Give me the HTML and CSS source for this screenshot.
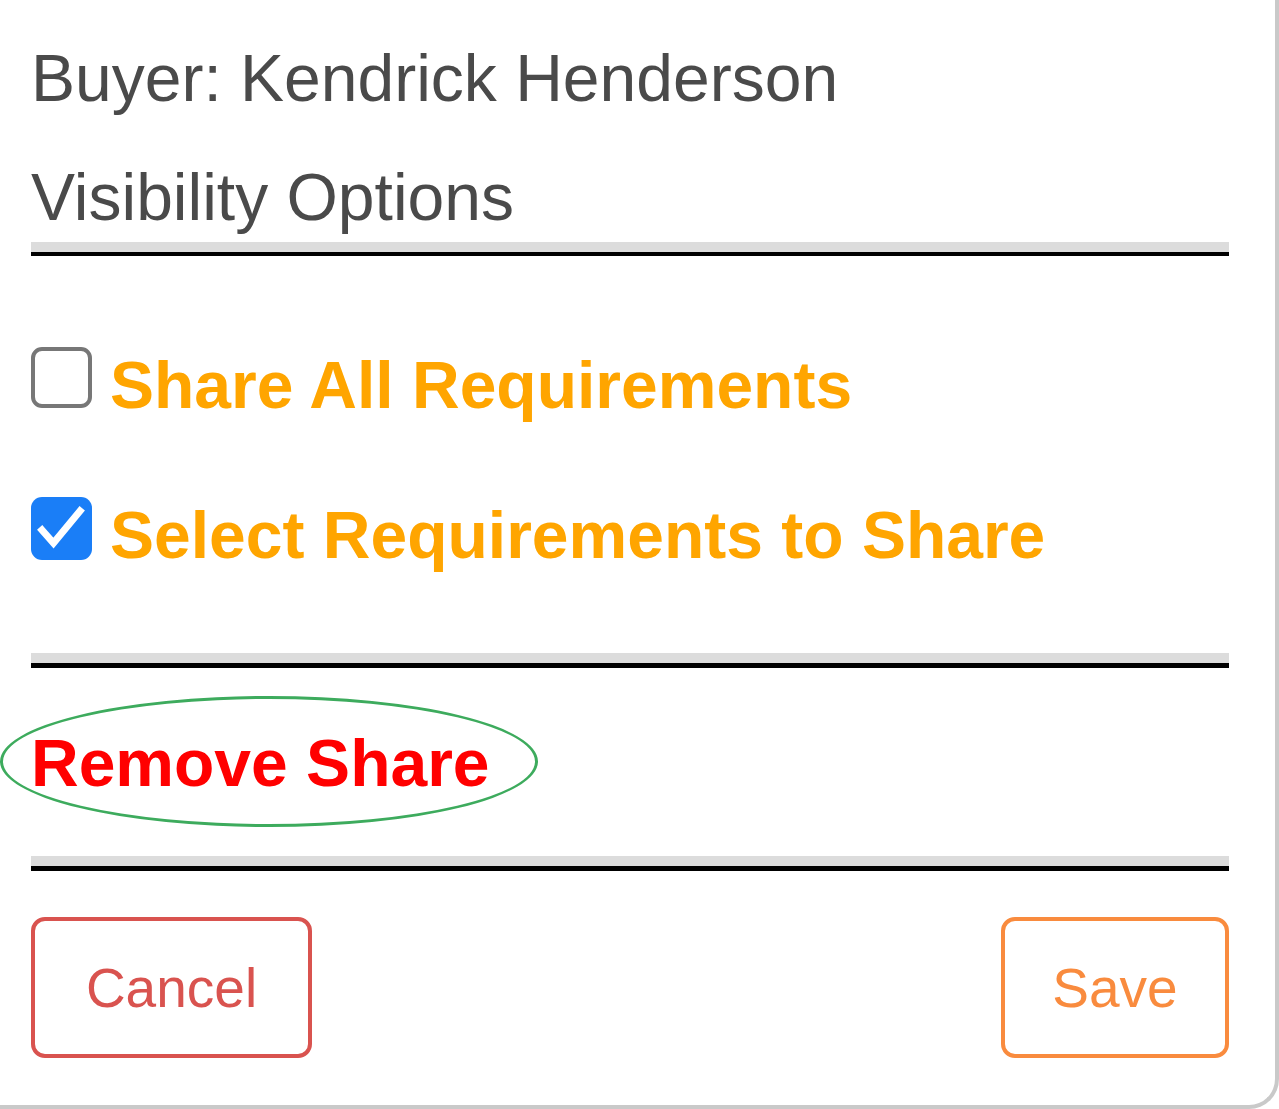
FILE: index.html
```html
<!DOCTYPE html>
<html lang="en">
<head>
<meta charset="utf-8">
<title>Share Visibility</title>
<link rel="stylesheet" href="styles.css">
</head>
<body>
<div class="panel">
  <div class="buyer">Buyer: Kendrick Henderson</div>
  <div class="section-title">Visibility Options</div>
  <div class="divider divider-top"></div>

  <label class="option option-first">
    <span class="box"></span>
    <span class="option-text">Share All Requirements</span>
  </label>
  <label class="option option-second">
    <span class="box box-checked">
      <svg viewBox="0 0 61 63" width="61" height="63" aria-hidden="true">
        <path d="M11 33 L22.5 46 L49 14" fill="none" stroke="#fff" stroke-width="7" stroke-linecap="square" stroke-linejoin="miter"/>
      </svg>
    </span>
    <span class="option-text">Select Requirements to Share</span>
  </label>

  <div class="divider divider-mid"></div>

  <div class="remove-row">
    <span class="remove">Remove Share</span>
    <span class="highlight"></span>
  </div>

  <div class="divider divider-bottom"></div>

  <div class="actions">
    <button class="btn btn-cancel" type="button">Cancel</button>
    <button class="btn btn-save" type="button">Save</button>
  </div>
</div>
</body>
</html>
```

FILE: styles.css
```css
* {
  box-sizing: border-box;
}

html, body {
  margin: 0;
  padding: 0;
  background: #ffffff;
}

body {
  font-family: "Liberation Sans", Arial, Helvetica, sans-serif;
  width: 1279px;
  height: 1109px;
  overflow: hidden;
}

.panel {
  position: relative;
  width: 1279px;
  height: 1109px;
  padding: 38px 46px 0 31px;
  background: #ffffff;
  border-right: 4px solid #c9c9c9;
  border-bottom: 4px solid #c9c9c9;
  border-bottom-right-radius: 30px;
}

.buyer,
.section-title {
  font-size: 66px;
  line-height: 80px;
  color: #4a4a4a;
  white-space: nowrap;
}

.section-title {
  margin-top: 39px;
}

.divider {
  height: 14px;
  border-top: 10px solid #dcdcdc;
  border-bottom: 4px solid #000000;
}

.divider-top {
  margin-top: 5px;
}

.option {
  display: flex;
  align-items: flex-start;
  gap: 18px;
  cursor: pointer;
}

.option-first {
  margin-top: 89px;
}

.option-second {
  margin-top: 70px;
}

.box {
  flex: 0 0 auto;
  width: 61px;
  height: 61px;
  margin-top: 2px;
  border: 4px solid #777777;
  border-radius: 11px;
  background: #ffffff;
}

.box-checked {
  height: 63px;
  border: none;
  background: #1a7ef7;
  display: flex;
}

.box-checked svg {
  display: block;
}

.option-text {
  font-size: 66px;
  line-height: 80px;
  font-weight: bold;
  color: #ffa500;
  white-space: nowrap;
}

.divider-mid {
  margin-top: 78px;
  height: 15px;
  border-bottom-width: 5px;
}

.remove-row {
  position: relative;
  margin-top: 55px;
  height: 80px;
}

.remove {
  display: block;
  font-size: 66px;
  line-height: 80px;
  font-weight: bold;
  color: #ff0000;
  white-space: nowrap;
}

.highlight {
  position: absolute;
  left: -31px;
  top: -27px;
  width: 538px;
  height: 131px;
  border: 3px solid #3dab5d;
  border-radius: 50%;
  pointer-events: none;
}

.divider-bottom {
  margin-top: 53px;
  height: 15px;
  border-bottom-width: 5px;
}

.actions {
  display: flex;
  justify-content: space-between;
  margin-top: 46px;
}

.btn {
  height: 141px;
  font-family: "Liberation Sans", Arial, Helvetica, sans-serif;
  font-size: 55px;
  background: #ffffff;
  border-radius: 14px;
  border: 4px solid;
  padding: 0;
  display: flex;
  align-items: center;
  justify-content: center;
  cursor: pointer;
}

.btn-cancel {
  width: 281px;
  color: #d9534f;
  border-color: #d9534f;
}

.btn-save {
  width: 228px;
  color: #f98b3e;
  border-color: #f98b3e;
}
```
